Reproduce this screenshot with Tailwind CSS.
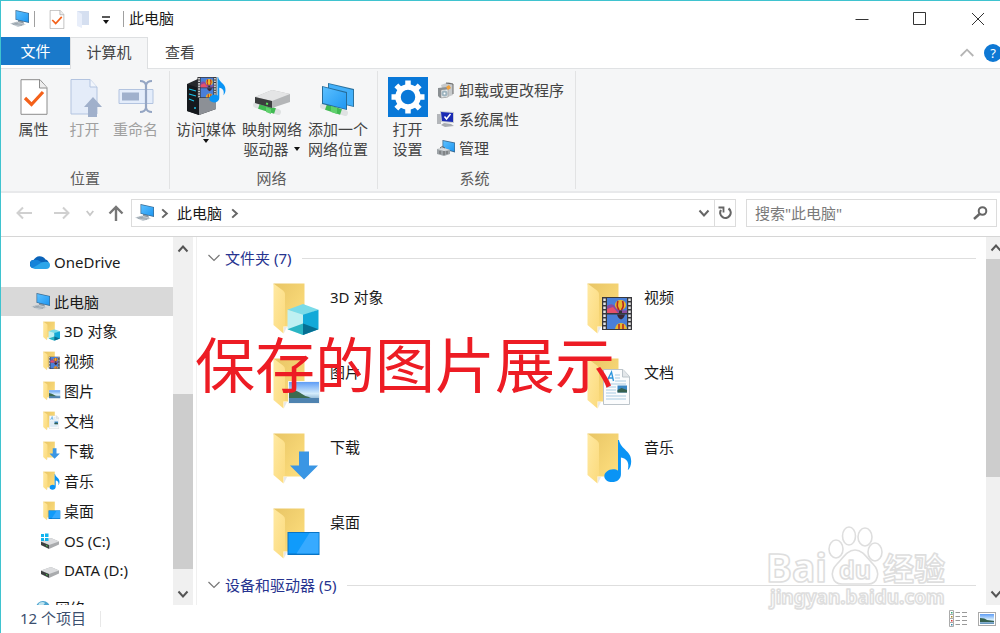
<!DOCTYPE html>
<html lang="zh-CN">
<head>
    <meta charset="UTF-8">
    <meta name="viewport" content="width=device-width, initial-scale=1.0">
    <title>此电脑</title>
    <script src="https://cdn.jsdelivr.net/npm/@tailwindcss/browser@4"></script>
    <style>
        body { font-family: 'Noto Sans', 'Noto Sans CJK SC', sans-serif; }
        .watermark text, .watermark path, .watermark ellipse { fill: #fff; stroke: #dedede; stroke-width: 1.6; stroke-linejoin: round; }
    </style>
</head>
<body class="h-screen overflow-hidden bg-white text-[15px] leading-5 text-[#1a1a1a]">

    <!-- Icon sprite -->
    <svg class="absolute w-0 h-0" aria-hidden="true">
        <defs>
            <linearGradient id="gScreen" x1="0" y1="0" x2="1" y2="1"><stop offset="0" stop-color="#5cc0ff"/><stop offset="1" stop-color="#1e97f2"/></linearGradient>
            <linearGradient id="gBack" x1="0" y1="0" x2="1" y2="1"><stop offset="0" stop-color="#e8c565"/><stop offset="1" stop-color="#ffe07f"/></linearGradient>
            <linearGradient id="gFlap" x1="0" y1="0" x2="1" y2="1"><stop offset="0" stop-color="#ffe9a2"/><stop offset="1" stop-color="#fbda7c"/></linearGradient>
            <linearGradient id="gSky" x1="0" y1="0" x2="0" y2="1"><stop offset="0" stop-color="#5f9df5"/><stop offset=".55" stop-color="#d4ecfb"/><stop offset="1" stop-color="#5b8fb8"/></linearGradient>
        </defs>
        <symbol id="pc" viewBox="0 0 20 18">
            <path d="M8 9l5 1 1 4-6-1z" fill="#8d99a3"/>
            <path d="M5.500 0L19 3v10L5.500 9.800z" fill="#3b6c94"/>
            <path d="M6.200 .9l12.100 2.700v8.500L6.200 9.200z" fill="url(#gScreen)"/>
            <path d="M0 13.600l7-2 9 2.600-8 2.800z" fill="#c3cbd1"/>
            <path d="M2 13.600l10 2M4.500 12.900l9 2M3 14.600l5-2" stroke="#8d99a3" stroke-width=".6"/>
        </symbol>
        <symbol id="folder" viewBox="0 0 48 52">
            <path d="M.5 .5h31v43H11z" fill="url(#gBack)"/>
            <path d="M11 44h3l-3 6z" fill="#e8e8e8"/>
            <path d="M.5 .5l9.500 7q2 1.500 2 3.500v31.500l-1.500 1v7L.5 42z" fill="url(#gFlap)"/>
        </symbol>
        <symbol id="film" viewBox="0 0 30 33">
            <path d="M0 0h30v33H0z" fill="#38383c"/>
            <path d="M5 1h20v15H5zM5 17.500h20V32H5z" fill="#4a7fd8"/>
            <path d="M5 9q5-4 9 1t11 3v3H5z" fill="#8a4ba0"/><path d="M5 12l6-2 5 6H5z" fill="#e6506a"/>
            <ellipse cx="18.500" cy="8" rx="5.500" ry="5" fill="#e8b92c"/><path d="M16 4q-2 5 1 9M20.500 4q2 5-1 9" stroke="#b62323" stroke-width="1.600" fill="none"/>
            <path d="M17 13.500h3V16h-3z" fill="#333"/>
            <path d="M15 17.500h8q-1 4-4 5-3-1-4-5z" fill="#3c2631"/>
            <path d="M13 32q1-6 6-6t6 6z" fill="#e8b92c"/><path d="M17 27v5M21 27v5" stroke="#b62323" stroke-width="1.500"/>
            <path d="M2.500 1.500v31M27.500 1.500v31" stroke="#e4e4e4" stroke-width="2.500" stroke-dasharray="2.500 1.500"/>
        </symbol>
        <symbol id="note" viewBox="0 0 28 44">
            <path d="M15 0c2 10 13 11 12.500 22 0 4-1.500 7-3.500 9 2-8-1-12-7-13v17c0 5-4 8-9 8-4.500 0-8-2.500-8-6s4-7 9-7c2 0 4 .5 5 1.500V0z" fill="#0a94f5"/>
        </symbol>
        <symbol id="photo" viewBox="0 0 32 23">
            <path d="M0 0h32v23H0z" fill="#f4f4f4"/><path d="M1 1h30v21H1z" fill="url(#gSky)"/>
            <path d="M1 8q8 1 13 5t10 3l-7 2H1z" fill="#3d6b51"/><path d="M1 17h30v5H1z" fill="#4f83b0"/>
        </symbol>
        <symbol id="cube" viewBox="0 0 32 32">
            <path d="M16 0l16 6-16 6L0 6z" fill="#7adbe8"/>
            <path d="M0 6l16 5v21L0 26z" fill="#bff0f2"/><path d="M16 11l16-5v20l-16 6z" fill="#12a9d8"/>
            <path d="M0 26l16-6v12z" fill="#2ab5c4"/><path d="M16 20l16 6-16 6z" fill="#066f92"/>
        </symbol>
        <symbol id="doc" viewBox="0 0 27 36">
            <path d="M.5 .5H20l6.500 7v28H.5z" fill="#fbfcfd" stroke="#bcc4ca"/><path d="M19.500 .5v7.500h7" fill="#e3e7ea" stroke="#bcc4ca"/>
            <path d="M4 12L8.500 3l2 9M5.500 9h4.500" stroke="#2e96dc" stroke-width="1.400" fill="none"/>
            <path d="M12 6h5M12 9h5M12 12h11M3 15h20M3 18h10M3 21h10M3 24h10M3 27h20M3 30h20" stroke="#a8cbe3"/>
            <path d="M14.500 16.500H24v7h-9.500z" fill="#3987c4"/><path d="M14.500 21l4-2 5.500 2v2.500h-9.500z" fill="#35604e"/>
        </symbol>
        <symbol id="down" viewBox="0 0 28 28"><path d="M9 0h10v14h9L14 28 0 14h9z" fill="#3a96e4"/></symbol>
        <symbol id="desk" viewBox="0 0 32 23"><path d="M0 0h32v23H0z" fill="#0873c4"/><path d="M1 1h30v20.500H1z" fill="#109bfb"/><path d="M22 1h9v20.500H9z" fill="#37aaff"/></symbol>
        <symbol id="f-cube" viewBox="0 0 48 52"><use href="#folder"/><use href="#cube" x="14" y="21" width="32" height="31"/></symbol>
        <symbol id="f-film" viewBox="0 0 48 52"><use href="#folder"/><use href="#film" x="15" y="14" width="30" height="33"/></symbol>
        <symbol id="f-photo" viewBox="0 0 48 52"><use href="#folder"/><use href="#photo" x="15" y="23" width="32" height="23"/></symbol>
        <symbol id="f-doc" viewBox="0 0 48 52"><use href="#folder"/><use href="#doc" x="16" y="11" width="27" height="36"/></symbol>
        <symbol id="f-down" viewBox="0 0 48 52"><use href="#folder"/><use href="#down" x="17" y="18" width="28" height="29"/></symbol>
        <symbol id="f-note" viewBox="0 0 48 52"><use href="#folder"/><use href="#note" x="17" y="7" width="28" height="43"/></symbol>
        <symbol id="f-desk" viewBox="0 0 48 52"><use href="#folder"/><use href="#desk" x="14" y="24" width="33" height="23"/></symbol>
        <symbol id="drive" viewBox="0 0 20 12">
            <path d="M1 4.500L11 1l8 3.500v3L9 12 1 8z" fill="#a9abad"/><path d="M1 4.500L11 1l8 3.500L9 8z" fill="#dcdddf"/>
            <path d="M1 4.800L9 8v3.800L1 8z" fill="#3c3f40"/><path d="M6 8.500l1.500 .6" stroke="#4fd84f"/>
        </symbol>
        <symbol id="chev-down" viewBox="0 0 12 12"><path d="M1.500 3.500L6 8.500l4.500-5" fill="none" stroke="currentColor" stroke-width="2"/></symbol>
        <symbol id="chev-up" viewBox="0 0 12 12"><path d="M1.500 8.500L6 3.500l4.500 5" fill="none" stroke="currentColor" stroke-width="2"/></symbol>
        <symbol id="chev-right" viewBox="0 0 12 12"><path d="M3.500 1.500L8.500 6l-5 4.500" fill="none" stroke="currentColor" stroke-width="2.200"/></symbol>
        <symbol id="checkdoc" viewBox="0 0 28 36">
            <path d="M1 .7h19l7 8v26.600H1z" fill="#fff" stroke="#8c8c8c"/><path d="M19.500 1v8h7.500" fill="#eee" stroke="#8c8c8c"/>
            <path d="M5 19l6.500 6.500L23 13" fill="none" stroke="#f4611a" stroke-width="3.200"/>
        </symbol>
    </svg>

    <div class="relative flex flex-col h-full border-t border-l border-[#3fc3cf] overflow-hidden">

        <!-- Title bar -->
        <header class="flex items-center h-9 pl-[9px] shrink-0">
            <svg class="w-5 h-[18px]"><use href="#pc"/></svg>
            <span class="w-px h-4 ml-1 bg-[#a0a0a0]"></span>
            <button class="ml-[14px]" aria-label="属性"><svg class="block w-4 h-[19px]"><use href="#checkdoc"/></svg></button>
            <button class="ml-3" aria-label="新建文件夹">
                <svg class="block w-3 h-[18px]" viewBox="0 0 12 18"><path d="M0 1h12v14H0z" fill="#d5dff0"/><path d="M0 1l5 3v14l-5-2z" fill="#e8eefa"/></svg>
            </button>
            <button class="ml-3" aria-label="自定义快速访问工具栏">
                <svg class="block w-2.5 h-3" viewBox="0 0 10 12"><path d="M1 4h8" stroke="#222" stroke-width="1.500"/><path d="M2 7h6l-3 4z" fill="#111"/></svg>
            </button>
            <span class="w-px h-4 ml-3 bg-[#a0a0a0]"></span>
            <h1 class="ml-[5px] pb-[2px]">此电脑</h1>
            <div class="flex h-full ml-auto -mr-[7px] text-[#333]">
                <button class="w-[58px] flex items-center justify-center" aria-label="最小化"><svg class="w-[14px] h-[14px]" viewBox="0 0 14 14"><path d="M.5 7.500h13" stroke="currentColor"/></svg></button>
                <button class="w-[58px] flex items-center justify-center" aria-label="最大化"><svg class="w-[14px] h-[14px]" viewBox="0 0 14 14"><path d="M.5 .5h12v12H.5z" fill="none" stroke="currentColor"/></svg></button>
                <button class="w-[58px] flex items-center justify-center" aria-label="关闭"><svg class="w-[14px] h-[14px]" viewBox="0 0 14 14"><path d="M1 1l12 12M13 1L1 13" stroke="currentColor"/></svg></button>
            </div>
        </header>

        <!-- Tabs -->
        <nav class="flex h-8 shrink-0 border-b border-[#e0e2e4] text-[#444]">
            <button class="w-[69px] h-7 bg-[#1979ca] text-white">文件</button>
            <button class="w-[78px] h-8 pb-1 bg-[#f5f6f7] border border-b-0 border-[#dddfe1]">计算机</button>
            <button class="w-16 h-[30px] pb-px">查看</button>
            <div class="flex items-center ml-auto -mr-[2px]">
                <button class="mr-[10px] text-[#b4b4b4]" aria-label="折叠功能区"><svg class="block w-[14px] h-[14px]" viewBox="0 0 14 14"><path d="M.7 10L7 3.700 13.300 10" fill="none" stroke="currentColor" stroke-width="1.800"/></svg></button>
                <button class="w-[18px] h-[18px] rounded-full bg-[#0e78d4] text-white text-[13px] leading-[18px]" aria-label="帮助">?</button>
            </div>
        </nav>

        <!-- Ribbon -->
        <section class="flex h-[124px] shrink-0 bg-[#f5f6f7] border-b-2 border-[#e8e9eb] text-[#444]">
            <div class="flex flex-col w-[169px] my-[2px] pt-[6px] border-r border-[#e2e3e4]">
                <div class="flex pl-[7px] h-[91px]">
                    <button class="w-[51px] flex flex-col items-center">
                        <svg class="w-7 h-10 mb-[2px]"><use href="#checkdoc"/></svg>属性
                    </button>
                    <button class="w-[51px] flex flex-col items-center text-[#a0a0a0]" disabled>
                        <svg class="w-[34px] h-10 mb-[2px]" viewBox="0 0 34 40"><path d="M3 2.500h19l7 7.500v27H3z" fill="#e4ecf9" stroke="#b3c4e0"/><path d="M22 2.500v7.500h7" fill="#f2f6fc" stroke="#b3c4e0"/><path d="M25 20l9 10h-5v10h-9V30h-4z" fill="#a0b0cb"/></svg>打开
                    </button>
                    <button class="w-[51px] flex flex-col items-center text-[#a0a0a0]" disabled>
                        <svg class="w-9 h-10 mb-[2px]" viewBox="0 0 36 40"><path d="M1 12.500h34v14H1z" fill="#e4edfb" stroke="#b3c4e0"/><path d="M4 15.500h17v8H4z" fill="#a0b1cd"/><path d="M22 4q5 0 6 4 1-4 6-4M22 35q5 0 6-4 1 4 6 4M28 7v25" fill="none" stroke="#94a5c3" stroke-width="2.200"/></svg><span class="whitespace-nowrap">重命名</span>
                    </button>
                </div>
                <span class="text-center text-[#5c5c5c]">位置</span>
            </div>

            <div class="flex flex-col w-[208px] my-[2px] pt-[6px] border-r border-[#e2e3e4]">
                <div class="flex pl-[3px] h-[91px]">
                    <button class="w-[66px] flex flex-col items-center whitespace-nowrap">
                        <svg class="w-10 h-10 mb-[2px]" viewBox="0 0 40 40">
                            <path d="M1 7l13-6 16 4v27l-17 6-12-4z" fill="#26292c"/><path d="M13 12l17-6v26l-17 6z" fill="#8c9096"/><path d="M1 7l12 4v27L1 34z" fill="#15191d"/>
                            <path d="M3 12l7 2M3 17l7 2M3 22l5 2M8 31h2" stroke="#1ec1e8" stroke-width="1.300"/>
                            <use href="#film" x="11" y="0" width="20" height="21"/><use href="#note" x="23" y="0" width="17" height="26"/>
                        </svg>访问媒体
                        <svg class="w-2 h-[5px] shrink-0" viewBox="0 0 8 5"><path d="M1 0h6L4 4z" fill="#111"/></svg>
                    </button>
                    <button class="w-[66px] flex flex-col items-center whitespace-nowrap">
                        <svg class="w-10 h-10 mb-[2px]" viewBox="0 0 40 40">
                            <path d="M4 28l22 7" fill="none" stroke="#dfe2e2" stroke-width="6" stroke-linecap="round"/><path d="M7 29l16 5" fill="none" stroke="#40ba52" stroke-width="6"/>
                            <path d="M3 20l17-7 18 4v8l-18 6-17-5z" fill="#b4b6b8"/><path d="M3 20l17-7 18 4-18 7z" fill="#e4e5e6"/><path d="M3 20l17 4v7L3 26z" fill="#3b3d3e"/><path d="M14 26.500l2 .5" stroke="#5de05d" stroke-width="2"/>
                            <path d="M14 30l5 2v5l-5-2z" fill="#5fd06c"/>
                        </svg>映射网络<span class="flex items-center gap-1">驱动器<svg class="w-2 h-[5px]" viewBox="0 0 8 5"><path d="M1 0h6L4 4z" fill="#111"/></svg></span>
                    </button>
                    <button class="w-[66px] flex flex-col items-center whitespace-nowrap">
                        <svg class="w-10 h-10 mb-[2px]" viewBox="0 0 40 40">
                            <path d="M10 6l26 6v18l-26-6z" fill="#2b729f"/><path d="M11 7l24 6v16l-24-6z" fill="#43b0fa"/>
                            <path d="M5 29l22 7" fill="none" stroke="#dfe2e2" stroke-width="6" stroke-linecap="round"/><path d="M8 30l15 5" fill="none" stroke="#40ba52" stroke-width="6"/>
                            <path d="M4 9l25 6v18L4 27z" fill="#266c9a"/><path d="M5 10l23 6v16L5 26z" fill="url(#gScreen)"/>
                            <path d="M13 29l6 2v6l-6-2z" fill="#5fd06c"/>
                        </svg>添加一个<span>网络位置</span>
                    </button>
                </div>
                <span class="pr-1 text-center text-[#5c5c5c]">网络</span>
            </div>

            <div class="flex flex-col w-[198px] my-[2px] pt-[6px] border-r border-[#e2e3e4]">
                <div class="flex pl-1 h-[91px]">
                    <button class="w-[51px] flex flex-col items-center">
                        <svg class="w-10 h-10 mb-[2px]" viewBox="0 0 40 40">
                            <path d="M0 0h40v40H0z" fill="#0878d8"/>
                            <g stroke="#fff" stroke-width="5.500"><path d="M20 3.500v6M20 30.500v6M3.500 20h6M30.500 20h6"/><path d="M20 3.500v6M20 30.500v6M3.500 20h6M30.500 20h6" transform="rotate(45 20 20)"/></g>
                            <circle cx="20" cy="20" r="10" fill="none" stroke="#fff" stroke-width="5.500"/>
                        </svg>打开<span>设置</span>
                    </button>
                    <div class="flex flex-col -mt-[2px] pl-1">
                        <button class="flex items-center gap-1 h-[29px]">
                            <svg class="w-[18px] h-[18px]" viewBox="0 0 18 18"><path d="M4 4l8-3 4 2v11l-8 3z" fill="#c7cacc"/><path d="M9 2l7 1v10" fill="none" stroke="#666"/><path d="M1 7l9-1v10l-7 1-2-2z" fill="#8a8f92"/><path d="M4 9l7-1v8l-7 1z" fill="#e7e9ea" stroke="#888" stroke-width=".5"/><circle cx="7.500" cy="12.500" r="3" fill="#9eb4bf"/><circle cx="7.500" cy="12.500" r="1" fill="#fff"/><path d="M9 6l3-2 2 3-3 2z" fill="#f0a13c"/></svg>卸载或更改程序
                        </button>
                        <button class="flex items-center gap-1 h-[29px]">
                            <svg class="w-[18px] h-[18px]" viewBox="0 0 18 18"><path d="M0 4h4v10H0z" fill="#b3b6ba"/><path d="M3 1l14 1v11L4 12z" fill="#c9cdd2"/><path d="M4 2l12 1v9L5 11z" fill="#1a2bb4"/><path d="M7.500 6.500l2 2.500L13.500 4" fill="none" stroke="#fff" stroke-width="1.500"/><path d="M7 13l7 1 3 2-9 1-4-2z" fill="#a7abb0"/></svg>系统属性
                        </button>
                        <button class="flex items-center gap-1 h-[29px]">
                            <svg class="w-[18px] h-[18px]" viewBox="0 0 18 18"><path d="M5.500 1L18 3.500v10L5.500 10z" fill="#3b6c94"/><path d="M6.300 2l11 2.200v8L6.300 9.500z" fill="url(#gScreen)"/><path d="M0 10l7-1 6 2v4l-6 2-7-2z" fill="#9da3a7"/><path d="M0 10l7-1 6 2-6 1z" fill="#d9dcde"/><path d="M3 9q2-3 5 0" fill="none" stroke="#666"/><path d="M3 12v3M7 12v4M10 12v3" stroke="#555" stroke-width=".8"/></svg>管理
                        </button>
                    </div>
                </div>
                <span class="pr-1 text-center text-[#5c5c5c]">系统</span>
            </div>
        </section>

        <!-- Address bar -->
        <section class="flex items-center h-11 shrink-0 pl-[15px] pr-[3px] pb-[3px] border-b border-[#d6d6d6]">
            <button class="w-4 text-[#d0d0d0]" aria-label="后退"><svg class="block w-4 h-4" viewBox="0 0 16 16"><path d="M16 8H1.500M7 2.500L1.500 8 7 13.500" fill="none" stroke="currentColor" stroke-width="2"/></svg></button>
            <button class="w-4 ml-[22px] text-[#d0d0d0]" aria-label="前进"><svg class="block w-4 h-4" viewBox="0 0 16 16"><path d="M0 8h14.500M9 2.500L14.500 8 9 13.500" fill="none" stroke="currentColor" stroke-width="2"/></svg></button>
            <button class="ml-4 text-[#c8c8c8]" aria-label="最近浏览的位置"><svg class="block w-2 h-2" viewBox="0 0 8 8"><path d="M.7 2L4 6l3.300-4" fill="none" stroke="currentColor" stroke-width="1.800"/></svg></button>
            <button class="ml-[14px] text-[#777]" aria-label="上移"><svg class="block w-4 h-4" viewBox="0 0 16 16"><path d="M8 16V2M1.500 8.500L8 2l6.500 6.500" fill="none" stroke="currentColor" stroke-width="2.400"/></svg></button>
            <div class="flex items-center flex-1 h-7 ml-[7px] pl-[3px] border border-[#dcdcdc] text-[#666]">
                <svg class="w-5 h-[18px]"><use href="#pc"/></svg>
                <svg class="w-[11px] h-[11px] ml-1"><use href="#chev-right"/></svg>
                <button class="ml-[7px] pb-px text-[#1a1a1a]">此电脑</button>
                <svg class="w-[11px] h-[11px] ml-[7px]"><use href="#chev-right"/></svg>
                <button class="ml-auto mr-1" aria-label="以前的位置"><svg class="block w-3 h-3"><use href="#chev-down"/></svg></button>
                <button class="flex items-center justify-center w-[21px] h-full border-l border-[#dcdcdc]" aria-label="刷新">
                    <svg class="w-[14px] h-[14px]" viewBox="0 0 14 14"><path d="M10.500 2.500A5.200 5.200 0 1 1 3 4" fill="none" stroke="currentColor" stroke-width="2.200"/><path d="M.5 1.500h5v5" fill="none" stroke="currentColor" stroke-width="1.800"/></svg>
                </button>
            </div>
            <label class="flex items-center w-[251px] h-7 ml-[10px] px-2 border border-[#dcdcdc] text-[#666]">
                <input type="search" aria-label="搜索" placeholder='搜索"此电脑"' class="flex-1 min-w-0 pb-px outline-none placeholder:text-[#7a7a7a]">
                <svg class="w-[15px] h-[14px]" viewBox="0 0 15 14"><circle cx="9.500" cy="5" r="3.800" fill="none" stroke="currentColor" stroke-width="2"/><path d="M6.500 8L1 13" stroke="currentColor" stroke-width="2.400"/></svg>
            </label>
        </section>

        <div class="flex flex-1 min-h-0">
            <!-- Navigation pane -->
            <nav class="w-[172px] shrink-0 overflow-hidden text-[#1a1a1a]">
                <a href="#" class="flex items-center h-[30px] mt-[10px] pl-[29px] pb-px gap-1">
                    <svg class="w-5 h-[14px]" viewBox="0 0 20 14"><path d="M4 13a4 4 0 0 1-.5-8A7 7 0 0 1 15.500 4.500 4.500 4.500 0 0 1 16 13z" fill="#0a63b9"/><path d="M3.500 5q3-1 6 1l6 4-11 3.500A4.300 4.300 0 0 1 3.500 5z" fill="#1583d9"/><path d="M3 12.700l9-5.500q8-1.500 8 2.800a4 4 0 0 1-4 4H5z" fill="#2ba5ea"/></svg>OneDrive
                </a>
                <a href="#" class="flex items-center h-[29px] mt-[10px] pl-[30px] gap-[3px] bg-[#d9d9d9]"><svg class="w-5 h-[18px]"><use href="#pc"/></svg>此电脑</a>
                <a href="#" class="flex items-center h-[30px] pl-[42px] pb-px gap-[3px]"><svg class="w-[18px] h-5"><use href="#f-cube"/></svg>3D 对象</a>
                <a href="#" class="flex items-center h-[30px] pl-[42px] pb-px gap-[3px]"><svg class="w-[18px] h-5"><use href="#f-film"/></svg>视频</a>
                <a href="#" class="flex items-center h-[30px] pl-[42px] pb-px gap-[3px]"><svg class="w-[18px] h-5"><use href="#f-photo"/></svg>图片</a>
                <a href="#" class="flex items-center h-[30px] pl-[42px] pb-px gap-[3px]"><svg class="w-[18px] h-5"><use href="#f-doc"/></svg>文档</a>
                <a href="#" class="flex items-center h-[30px] pl-[42px] pb-px gap-[3px]"><svg class="w-[18px] h-5"><use href="#f-down"/></svg>下载</a>
                <a href="#" class="flex items-center h-[30px] pl-[42px] pb-px gap-[3px]"><svg class="w-[18px] h-5"><use href="#f-note"/></svg>音乐</a>
                <a href="#" class="flex items-center h-[30px] pl-[42px] pb-px gap-[3px]"><svg class="w-[18px] h-5"><use href="#f-desk"/></svg>桌面</a>
                <a href="#" class="flex items-center h-[29px] pl-[39px] gap-1">
                    <svg class="w-5 h-[18px]" viewBox="0 0 20 18"><use href="#drive" y="5" width="20" height="12"/><path d="M1 2h3v3H1zM5 1.500h3.500V5H5zM1 6h3v3H1zM5 6h3.500v3H5z" fill="#11b4ee"/></svg>OS (C:)
                </a>
                <a href="#" class="flex items-center h-[29px] pl-[39px] gap-1">
                    <svg class="w-5 h-[18px]" viewBox="0 0 20 18"><use href="#drive" y="5" width="20" height="12"/></svg>DATA (D:)
                </a>
                <a href="#" class="flex items-center h-[30px] mt-[9px] pl-[34px] gap-1">
                    <svg class="w-4 h-4" viewBox="0 0 16 16"><circle cx="8" cy="8" r="7" fill="#4ba3cf"/><path d="M4 3q4-2 6 0l-3 4-4-1z" fill="#bfe3ee"/></svg>网络
                </a>
            </nav>
            <div class="flex flex-col items-center w-5 shrink-0 bg-[#f0f0f0] text-[#555]">
                <button class="h-6" aria-label="向上滚动"><svg class="w-3 h-3"><use href="#chev-up"/></svg></button>
                <div class="flex-[133]"></div>
                <div class="w-full flex-[175] bg-[#cdcdcd]"></div>
                <button class="h-9 pt-[14px]" aria-label="向下滚动"><svg class="w-3 h-3"><use href="#chev-down"/></svg></button>
            </div>

            <!-- Content -->
            <main class="flex-1 min-w-0 ml-[3px] overflow-hidden border-l border-[#f0f0f0]">
                <div class="flex items-center h-5 mt-[11px] pl-[11px] pr-[10px] text-[#26338f]">
                    <svg class="w-3 h-3 mr-[5px] text-[#777]" viewBox="0 0 12 12"><path d="M.5 3L6 8.500 11.500 3" fill="none" stroke="currentColor" stroke-width="1.200"/></svg>
                    <h2 class="pb-px">文件夹 (7)</h2>
                    <span class="flex-1 h-px ml-[11px] bg-[#dedede]"></span>
                </div>
                <ul class="grid grid-cols-[repeat(auto-fill,314px)] mt-[7px] pl-[76px]">
                    <li class="flex h-[75px] pt-2 gap-[9px]"><svg class="w-12 h-[52px]"><use href="#f-cube"/></svg><span class="mt-1">3D 对象</span></li>
                    <li class="flex h-[75px] pt-2 gap-[9px]"><svg class="w-12 h-[52px]"><use href="#f-film"/></svg><span class="mt-1">视频</span></li>
                    <li class="flex h-[75px] pt-2 gap-[9px]"><svg class="w-12 h-[52px]"><use href="#f-photo"/></svg><span class="mt-1">图片</span></li>
                    <li class="flex h-[75px] pt-2 gap-[9px]"><svg class="w-12 h-[52px]"><use href="#f-doc"/></svg><span class="mt-1">文档</span></li>
                    <li class="flex h-[75px] pt-2 gap-[9px]"><svg class="w-12 h-[52px]"><use href="#f-down"/></svg><span class="mt-1">下载</span></li>
                    <li class="flex h-[75px] pt-2 gap-[9px]"><svg class="w-12 h-[52px]"><use href="#f-note"/></svg><span class="mt-1">音乐</span></li>
                    <li class="flex h-[75px] pt-2 gap-[9px]"><svg class="w-12 h-[52px]"><use href="#f-desk"/></svg><span class="mt-1">桌面</span></li>
                </ul>
                <div class="flex items-center h-5 pl-[11px] pr-[10px] text-[#26338f]">
                    <svg class="w-3 h-3 mr-[5px] text-[#777]" viewBox="0 0 12 12"><path d="M.5 3L6 8.500 11.500 3" fill="none" stroke="currentColor" stroke-width="1.200"/></svg>
                    <h2 class="pb-px">设备和驱动器 (5)</h2>
                    <span class="flex-1 h-px ml-[11px] bg-[#dedede]"></span>
                </div>
            </main>
            <div class="w-[14px] shrink-0 overflow-hidden text-[#555]">
                <div class="flex flex-col items-center w-5 h-full bg-[#f0f0f0]">
                    <button class="h-[22px]" aria-label="向上滚动"><svg class="w-3 h-3"><use href="#chev-up"/></svg></button>
                    <div class="w-full flex-[217] bg-[#cdcdcd]"></div>
                    <div class="flex-[92]"></div>
                    <button class="h-9 pt-[14px]" aria-label="向下滚动"><svg class="w-3 h-3"><use href="#chev-down"/></svg></button>
                </div>
            </div>
        </div>

        <!-- Status bar -->
        <footer class="flex items-center h-7 shrink-0 pl-[19px] pr-1 text-[#3c4f6e]">
            <span class="pb-[2px]">12 个项目</span>
            <span class="w-px h-4 ml-[14px] bg-[#e8e8e8]"></span>
            <button class="ml-auto" aria-label="详细信息">
                <svg class="block w-[18px] h-[18px]" viewBox="0 0 18 18"><path d="M.5 .5h4v4h-4zM.5 4.500h4v4h-4zM.5 8.500h4v4h-4zM.5 12.500h4v4h-4z" fill="#fff" stroke="#aaa"/><path d="M2 2h1.500v1.500H2z" fill="#3a7"/><path d="M2 6h1.500v1.500H2z" fill="#a82"/><path d="M2 10h1.500v1.500H2z" fill="#d33"/><path d="M2 14h1.500v1.500H2z" fill="#38a"/><path d="M6.500 2.500H11M13 2.500h5M6.500 6.500H11M13 6.500h5M6.500 10.500H11M13 10.500h5M6.500 14.500H11M13 14.500h5" stroke="#999"/></svg>
            </button>
            <button class="ml-[11px] p-px border border-[#aaa]" aria-label="大图标"><svg class="block w-[14px] h-[10px]" viewBox="0 0 14 10"><path d="M0 0h14v10H0z" fill="url(#gSky)"/><path d="M0 4q5 0 7 2l7 1v1H0z" fill="#35604e"/></svg></button>
        </footer>

        <!-- Caption and watermark over the window -->
        <p class="absolute left-[194px] top-[324px] text-[60px] leading-20 text-[#ed1c24] whitespace-nowrap pointer-events-none">保存的图片展示</p>
        <svg class="watermark absolute right-[50px] bottom-[18px] w-[186px] h-[92px] pointer-events-none" viewBox="0 0 186 92" font-family="Noto Sans, Noto Sans CJK SC, sans-serif" font-weight="700">
            <text x="2" y="59" font-size="39">Bai</text>
            <ellipse cx="72" cy="26" rx="7" ry="9"/><ellipse cx="85" cy="13" rx="6.500" ry="9"/><ellipse cx="101" cy="14" rx="7" ry="9"/><ellipse cx="111" cy="29" rx="7" ry="9"/>
            <path d="M91 27c8 0 12 8 18 14 8 8 5 20-5 20H78c-10 0-13-12-5-20 6-6 10-14 18-14z"/>
            <text x="75" y="56" font-size="25">du</text>
            <text x="119" y="57" font-size="31">经验</text>
            <text x="6" y="81" font-size="19">jingyan.baidu.com</text>
        </svg>
    </div>
</body>
</html>
